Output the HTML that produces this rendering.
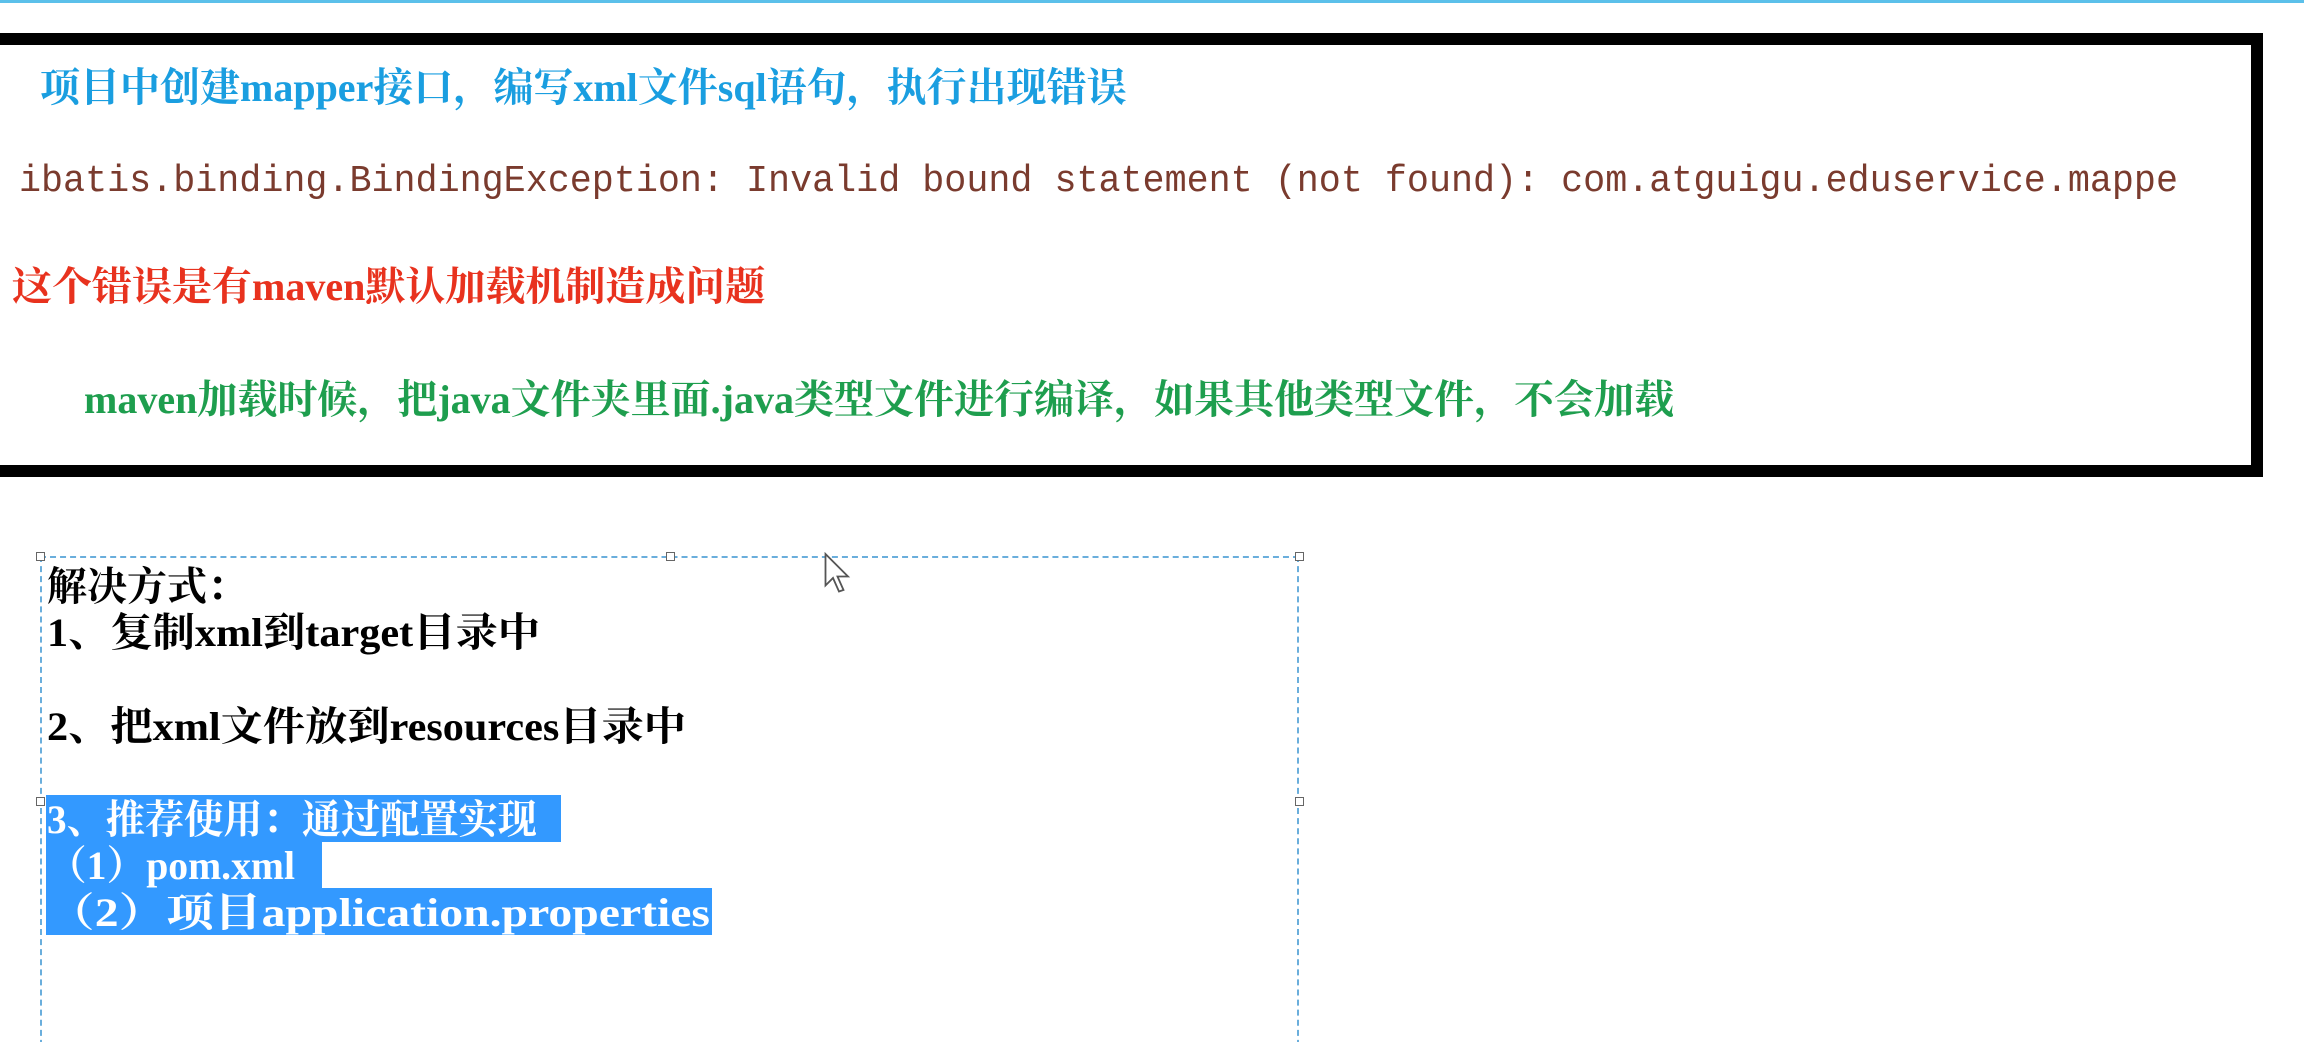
<!DOCTYPE html>
<html><head><meta charset="utf-8"><style>
html,body{margin:0;padding:0;background:#fff;width:2304px;height:1042px;overflow:hidden;position:relative}
.t{position:absolute;white-space:nowrap;font-family:"Liberation Serif","Noto Serif CJK SC",serif;font-weight:bold;font-size:40px;line-height:46px}
.hl{position:absolute;background:#3399ff}
.h{position:absolute;width:9px;height:9px;border:1.5px solid #666;background:#fff;box-sizing:border-box}
svg text{font-family:"Liberation Serif","Noto Serif CJK SC",serif;font-weight:bold;font-size:40px}
</style></head><body>
<div style="position:absolute;left:0;top:0;width:2304px;height:3px;background:#5bc0ea"></div>
<div style="position:absolute;left:-12px;top:33px;width:2275px;height:444px;border:12px solid #000;box-sizing:border-box"></div>
<div class="t" style="left:40px;top:65px;color:#1a9ee0">项目中创建mapper接口，编写xml文件sql语句，执行出现错误</div>
<svg style="position:absolute;left:0;top:150px" width="2240" height="60"><text x="19" y="41" textLength="2159" lengthAdjust="spacingAndGlyphs" style="font-family:'Liberation Mono',monospace;font-weight:normal;font-size:38px" fill="#7a3b2e">ibatis.binding.BindingException: Invalid bound statement (not found): com.atguigu.eduservice.mappe</text></svg>
<div class="t" style="left:12px;top:264px;color:#e8321e">这个错误是有maven默认加载机制造成问题</div>
<div class="t" style="left:84px;top:377px;color:#1e9e4e">maven加载时候，把java文件夹里面.java类型文件进行编译，如果其他类型文件，不会加载</div>

<div style="position:absolute;left:40px;top:556px;width:1259px;height:500px;border:2px dashed #6aaedc;box-sizing:border-box"></div>
<div class="h" style="left:36px;top:552px"></div>
<div class="h" style="left:666px;top:552px"></div>
<div class="h" style="left:1295px;top:552px"></div>
<div class="h" style="left:36px;top:797px"></div>
<div class="h" style="left:1295px;top:797px"></div>

<div class="hl" style="left:46px;top:795px;width:515px;height:47px"></div>
<div class="hl" style="left:46px;top:842px;width:276px;height:46px"></div>
<div class="hl" style="left:46px;top:888px;width:666px;height:47px"></div>

<div class="t" style="left:47px;top:564px;color:#000">解决方式：</div>
<svg style="position:absolute;left:0;top:600px" width="1000" height="360">
<text x="47" y="46" textLength="493" lengthAdjust="spacingAndGlyphs" fill="#000">1、复制xml到target目录中</text>
<text x="47" y="140" textLength="639" lengthAdjust="spacingAndGlyphs" fill="#000">2、把xml文件放到resources目录中</text>
<text x="47" y="233" textLength="490" lengthAdjust="spacingAndGlyphs" fill="#fff">3、推荐使用：通过配置实现</text>
<text x="47" y="279" textLength="248" lengthAdjust="spacingAndGlyphs" fill="#fff">（1）pom.xml</text>
<text x="47" y="326" textLength="663" lengthAdjust="spacingAndGlyphs" fill="#fff">（2）项目application.properties</text>
</svg>

<svg style="position:absolute;left:824px;top:552px" width="30" height="46" viewBox="0 0 20 30"><path d="M1 1 L1 22 L6 17 L10 26 L13 25 L9 16 L16 16 Z" fill="#fff" stroke="#555" stroke-width="1.2"/></svg>
</body></html>
